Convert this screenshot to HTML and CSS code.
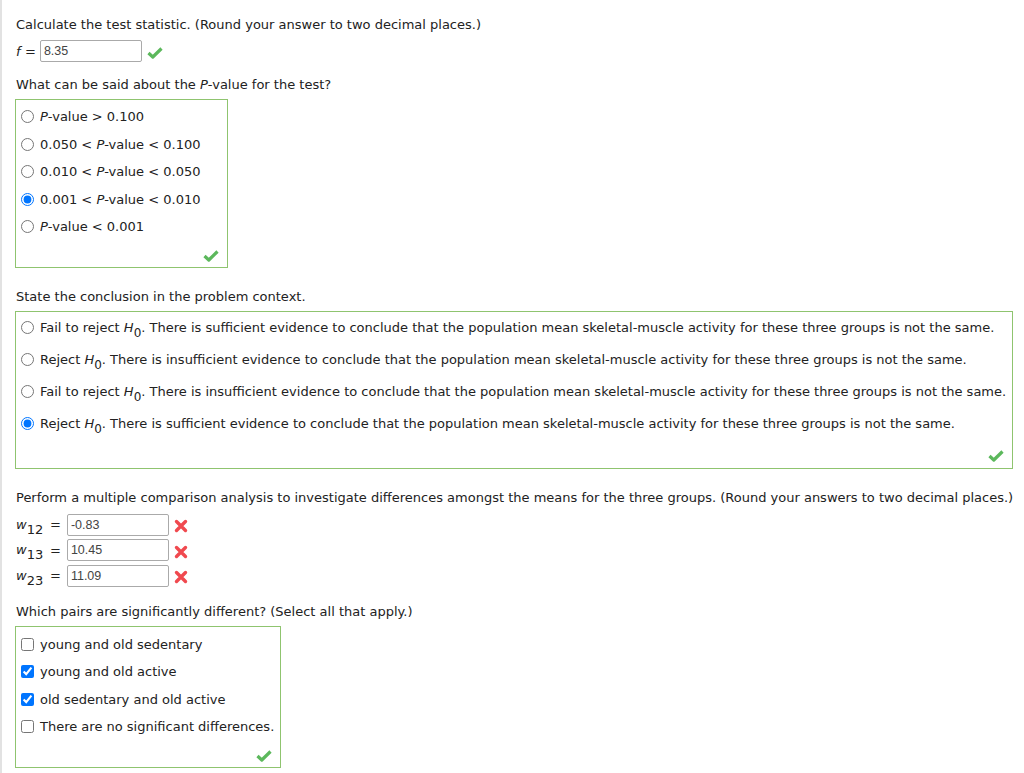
FILE: index.html
```html
<!DOCTYPE html>
<html>
<head>
<meta charset="utf-8">
<link rel="stylesheet" href="styles.css">
</head>
<body>
<div class="page">
  <p class="q q-first">Calculate the test statistic. (Round your answer to two decimal places.)</p>
  <div class="eqrow">
    <span class="var"><i>f</i></span><span class="eq">=</span>
    <span class="field">8.35</span>
    <svg class="ok" viewBox="0 0 16 13" width="16" height="13"><path d="M1.5 7 L5.8 11 L14.5 2.5" fill="none" stroke="#5cb85c" stroke-width="3.2" stroke-linejoin="round"/></svg>
  </div>

  <p class="q">What can be said about the <i>P</i>-value for the test?</p>
  <div class="box box1">
    <label class="opt"><input type="radio" name="p"><span><i>P</i>-value &gt; 0.100</span></label>
    <label class="opt"><input type="radio" name="p"><span>0.050 &lt; <i>P</i>-value &lt; 0.100</span></label>
    <label class="opt"><input type="radio" name="p"><span>0.010 &lt; <i>P</i>-value &lt; 0.050</span></label>
    <label class="opt"><input type="radio" name="p" checked><span>0.001 &lt; <i>P</i>-value &lt; 0.010</span></label>
    <label class="opt"><input type="radio" name="p"><span><i>P</i>-value &lt; 0.001</span></label>
    <div class="foot"><svg class="ok" viewBox="0 0 16 13" width="16" height="13"><path d="M1.5 7 L5.8 11 L14.5 2.5" fill="none" stroke="#5cb85c" stroke-width="3.2" stroke-linejoin="round"/></svg></div>
  </div>

  <p class="q">State the conclusion in the problem context.</p>
  <div class="box box2">
    <label class="opt wide"><input type="radio" name="c"><span>Fail to reject <i>H</i><sub>0</sub>. There is sufficient evidence to conclude that the population mean skeletal-muscle activity for these three groups is not the same.</span></label>
    <label class="opt wide"><input type="radio" name="c"><span>Reject <i>H</i><sub>0</sub>. There is insufficient evidence to conclude that the population mean skeletal-muscle activity for these three groups is not the same.</span></label>
    <label class="opt wide"><input type="radio" name="c"><span>Fail to reject <i>H</i><sub>0</sub>. There is insufficient evidence to conclude that the population mean skeletal-muscle activity for these three groups is not the same.</span></label>
    <label class="opt wide"><input type="radio" name="c" checked><span>Reject <i>H</i><sub>0</sub>. There is sufficient evidence to conclude that the population mean skeletal-muscle activity for these three groups is not the same.</span></label>
    <div class="foot"><svg class="ok" viewBox="0 0 16 13" width="16" height="13"><path d="M1.5 7 L5.8 11 L14.5 2.5" fill="none" stroke="#5cb85c" stroke-width="3.2" stroke-linejoin="round"/></svg></div>
  </div>

  <p class="q">Perform a multiple comparison analysis to investigate differences amongst the means for the three groups. (Round your answers to two decimal places.)</p>
  <div class="wgrid">
    <div class="wrow">
      <span class="wvar"><i>w</i><sub>12</sub></span><span class="eq">=</span>
      <span class="field">-0.83</span>
      <svg class="bad" viewBox="0 0 14 14" width="14" height="14"><path d="M2.5 2.5 L11.5 11.5 M11.5 2.5 L2.5 11.5" stroke="#f0494f" stroke-width="3.4" stroke-linecap="round"/></svg>
    </div>
    <div class="wrow">
      <span class="wvar"><i>w</i><sub>13</sub></span><span class="eq">=</span>
      <span class="field">10.45</span>
      <svg class="bad" viewBox="0 0 14 14" width="14" height="14"><path d="M2.5 2.5 L11.5 11.5 M11.5 2.5 L2.5 11.5" stroke="#f0494f" stroke-width="3.4" stroke-linecap="round"/></svg>
    </div>
    <div class="wrow">
      <span class="wvar"><i>w</i><sub>23</sub></span><span class="eq">=</span>
      <span class="field">11.09</span>
      <svg class="bad" viewBox="0 0 14 14" width="14" height="14"><path d="M2.5 2.5 L11.5 11.5 M11.5 2.5 L2.5 11.5" stroke="#f0494f" stroke-width="3.4" stroke-linecap="round"/></svg>
    </div>
  </div>

  <p class="q">Which pairs are significantly different? (Select all that apply.)</p>
  <div class="box box3">
    <label class="opt"><input type="checkbox"><span>young and old sedentary</span></label>
    <label class="opt"><input type="checkbox" checked><span>young and old active</span></label>
    <label class="opt"><input type="checkbox" checked><span>old sedentary and old active</span></label>
    <label class="opt"><input type="checkbox"><span>There are no significant differences.</span></label>
    <div class="foot"><svg class="ok" viewBox="0 0 16 13" width="16" height="13"><path d="M1.5 7 L5.8 11 L14.5 2.5" fill="none" stroke="#5cb85c" stroke-width="3.2" stroke-linejoin="round"/></svg></div>
  </div>
</div>
</body>
</html>
```

FILE: styles.css
```css
html, body {
  margin: 0;
  padding: 0;
  background: #ffffff;
}

body {
  font-family: "DejaVu Sans", Verdana, sans-serif;
  font-size: 13px;
  color: #222222;
}

.page {
  border-left: 2px solid #e2e2e2;
  padding: 0 0 0 14px;
  min-height: 773px;
  box-sizing: border-box;
}

.q {
  margin: 0;
  line-height: 16px;
}

.q-first {
  padding-top: 17px;
}

.eqrow {
  display: flex;
  align-items: center;
  margin-top: 7px;
  height: 22px;
}

.var {
  width: 8px;
}

.eq {
  margin: 0 4px 0 1px;
}

.field {
  display: inline-block;
  box-sizing: border-box;
  width: 102px;
  height: 22px;
  border: 1px solid #aaaaaa;
  border-radius: 2px;
  font-family: "Liberation Sans", Arial, sans-serif;
  font-size: 12.5px;
  color: #444;
  line-height: 20px;
  padding-left: 3px;
}

.ok {
  display: block;
}

.eqrow .ok {
  margin-left: 5px;
  margin-top: 3px;
}

.eqrow + .q {
  margin-top: 15px;
}

.box {
  display: block;
  box-sizing: border-box;
  border: 1px solid #8fc46f;
  margin-top: 6px;
  margin-left: -1px;
}

.box1 {
  width: 213px;
  padding-top: 3px;
}

.box2 {
  width: 998px;
}

.box3 {
  width: 266px;
  padding-top: 4px;
}

.opt {
  display: flex;
  align-items: center;
  height: 27.5px;
  white-space: nowrap;
}

.opt input {
  margin: 0 6px 0 5px;
  width: 13px;
  height: 13px;
  flex: none;
}

.opt.wide {
  height: 32px;
}

.opt sub, .wvar sub {
  font-size: 12px;
  line-height: 0;
  vertical-align: -5px;
}

.foot {
  display: flex;
  justify-content: flex-end;
  padding: 8px 8px 5px 0;
}

.box2 .foot {
  padding-top: 9px;
  padding-bottom: 6px;
}

.box + .q {
  margin-top: 21px;
}

.wgrid {
  margin-top: 8px;
}

.wrow {
  display: flex;
  align-items: center;
  height: 22px;
  margin-bottom: 3.5px;
}

.wvar {
  width: 31px;
  line-height: 16px;
}

.wvar sub {
  font-size: 13px;
}

.wrow .eq {
  margin: 0 6px 0 3px;
}

.bad {
  display: block;
  margin-left: 5px;
  margin-top: 3px;
}

.wgrid + .q {
  margin-top: 17px;
}
```
